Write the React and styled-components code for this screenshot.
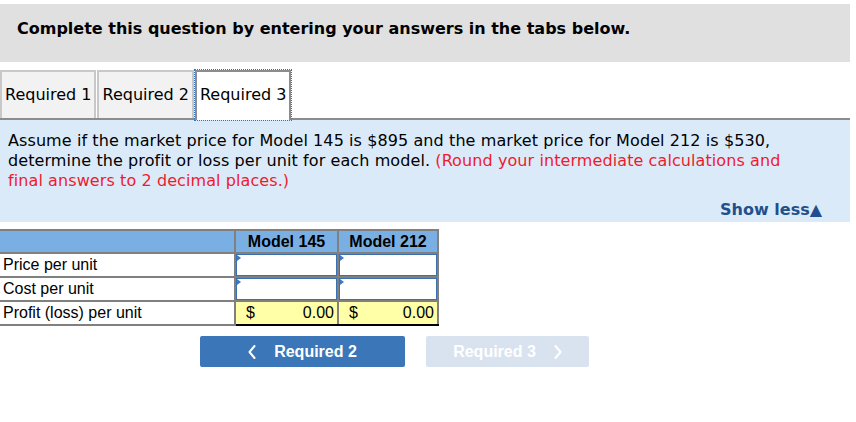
import React from "react";
import styled, { createGlobalStyle } from "styled-components";

const Global = createGlobalStyle`
  html, body { margin: 0; padding: 0; background: #fff; }
  body { font-family: "DejaVu Sans", Verdana, sans-serif; color: #000; }
`;

const Page = styled.div`
  width: 850px;
  padding-top: 4px;
`;

const Banner = styled.div`
  height: 58px;
  box-sizing: border-box;
  background: #e0e0e0;
  padding: 15px 17px 0;
  font-weight: bold;
  font-size: 16px;
  line-height: 20px;
`;

const TabBar = styled.div`
  margin-top: 8px;
  display: flex;
  align-items: flex-end;
  gap: 1px;
  border-bottom: 2px solid #8c8c8c;
  height: 48px;
`;

const Tab = styled.div`
  height: ${(p) => (p.$active ? "50px" : "48px")};
  margin-bottom: ${(p) => (p.$active ? "-2px" : "0")};
  box-sizing: border-box;
  padding: 12px 3px 0 3px;
  font-size: 16px;
  line-height: 22px;
  background: ${(p) => (p.$active ? "#fff" : "#f2f2f2")};
  border: 2px solid ${(p) => (p.$active ? "#8c8c8c" : "#c8c8c8")};
  border-bottom: none;
  outline: ${(p) => (p.$active ? "1px dotted #3b73b9" : "none")};
  outline-offset: 0;
  white-space: nowrap;
`;

const Prompt = styled.div`
  background: #dbeaf8;
  padding: 11px 60px 2px 8px;
  height: 102px;
  box-sizing: border-box;
  display: flex;
  flex-direction: column;
`;

const PromptText = styled.p`
  margin: 0;
  font-size: 16px;
  line-height: 20px;
  letter-spacing: 0.09px;
`;

const Red = styled.span`
  color: #ee1b2e;
`;

const ShowLess = styled.div`
  margin-top: auto;
  align-self: flex-end;
  margin-right: -32px;
  color: #1f4f8c;
  font-weight: bold;
  font-size: 16px;
  line-height: 20px;
`;

const Table = styled.table`
  margin-top: 7px;
  border-collapse: collapse;
  table-layout: fixed;
  font-family: "Liberation Sans", Arial, sans-serif;
  font-size: 16px;
`;

const Th = styled.th`
  background: #7aafe3;
  border: 2px solid #808080;
  border-left: ${(p) => (p.$first ? "none" : "2px solid #808080")};
  height: 21px;
  padding: 0;
  font-weight: bold;
  text-align: center;
  line-height: 20px;
`;

const Label = styled.td`
  border: 2px solid #808080;
  border-left: none;
  padding: 0 0 0 3px;
  height: 22px;
  line-height: 20px;
  text-align: left;
`;

const InputCell = styled.td`
  border: 2px solid #808080;
  padding: 0;
  height: 22px;
`;

const InputBox = styled.div`
  position: relative;
  height: 22px;
  box-sizing: border-box;
  border: 1px solid #3a6fb0;
  background: #fff;
  &::before {
    content: "";
    position: absolute;
    left: 0;
    top: 0;
    border-left: 4px solid #3a78c8;
    border-top: 3px solid transparent;
    border-bottom: 3px solid transparent;
  }
`;

const TotalCell = styled.td`
  background: #ffffa8;
  border: 2px solid #808080;
  border-top: 2px solid #000;
  border-bottom: 2px solid #000;
  padding: 0 3px 0 10px;
  height: 22px;
  line-height: 20px;
`;

const Total = styled.div`
  display: flex;
  justify-content: space-between;
`;

const Nav = styled.div`
  display: flex;
  gap: 21px;
  margin: 10px 0 0 200px;
`;

const NavButton = styled.div`
  width: ${(p) => p.$w}px;
  height: 31px;
  border-radius: 2px;
  background: ${(p) => (p.$disabled ? "#d9e3f0" : "#3b76b8")};
  color: #fff;
  display: flex;
  align-items: center;
  justify-content: center;
  gap: ${(p) => p.$gap}px;
  font-family: "Liberation Sans", Arial, sans-serif;
  font-weight: bold;
  font-size: 16px;
  box-sizing: border-box;
`;

const Chevron = ({ dir }) => (
  <svg width="8" height="14" viewBox="0 0 8 14">
    <polyline
      points={dir === "left" ? "6.5,1 1.5,7 6.5,13" : "1.5,1 6.5,7 1.5,13"}
      fill="none"
      stroke="#fff"
      strokeWidth="2"
      strokeLinecap="round"
      strokeLinejoin="round"
    />
  </svg>
);

export default function App() {
  return (
    <Page>
      <Global />
      <Banner>Complete this question by entering your answers in the tabs below.</Banner>
      <TabBar>
        <Tab>Required 1</Tab>
        <Tab>Required 2</Tab>
        <Tab $active>Required 3</Tab>
      </TabBar>
      <Prompt>
        <PromptText>
          Assume if the market price for Model 145 is $895 and the market price for Model 212 is $530,
          determine the profit or loss per unit for each model.{" "}
          <Red>(Round your intermediate calculations and final answers to 2 decimal places.)</Red>
        </PromptText>
        <ShowLess>Show less▲</ShowLess>
      </Prompt>
      <Table>
        <colgroup>
          <col style={{ width: 235 }} />
          <col style={{ width: 103 }} />
          <col style={{ width: 100 }} />
        </colgroup>
        <thead>
          <tr>
            <Th $first></Th>
            <Th>Model 145</Th>
            <Th>Model 212</Th>
          </tr>
        </thead>
        <tbody>
          <tr>
            <Label>Price per unit</Label>
            <InputCell><InputBox /></InputCell>
            <InputCell><InputBox /></InputCell>
          </tr>
          <tr>
            <Label>Cost per unit</Label>
            <InputCell><InputBox /></InputCell>
            <InputCell><InputBox /></InputCell>
          </tr>
          <tr>
            <Label>Profit (loss) per unit</Label>
            <TotalCell><Total><span>$</span><span>0.00</span></Total></TotalCell>
            <TotalCell><Total><span>$</span><span>0.00</span></Total></TotalCell>
          </tr>
        </tbody>
      </Table>
      <Nav>
        <NavButton $w={205} $gap={18}>
          <Chevron dir="left" />
          <span>Required 2</span>
        </NavButton>
        <NavButton $w={163} $gap={18} $disabled>
          <span>Required 3</span>
          <Chevron dir="right" />
        </NavButton>
      </Nav>
    </Page>
  );
}
